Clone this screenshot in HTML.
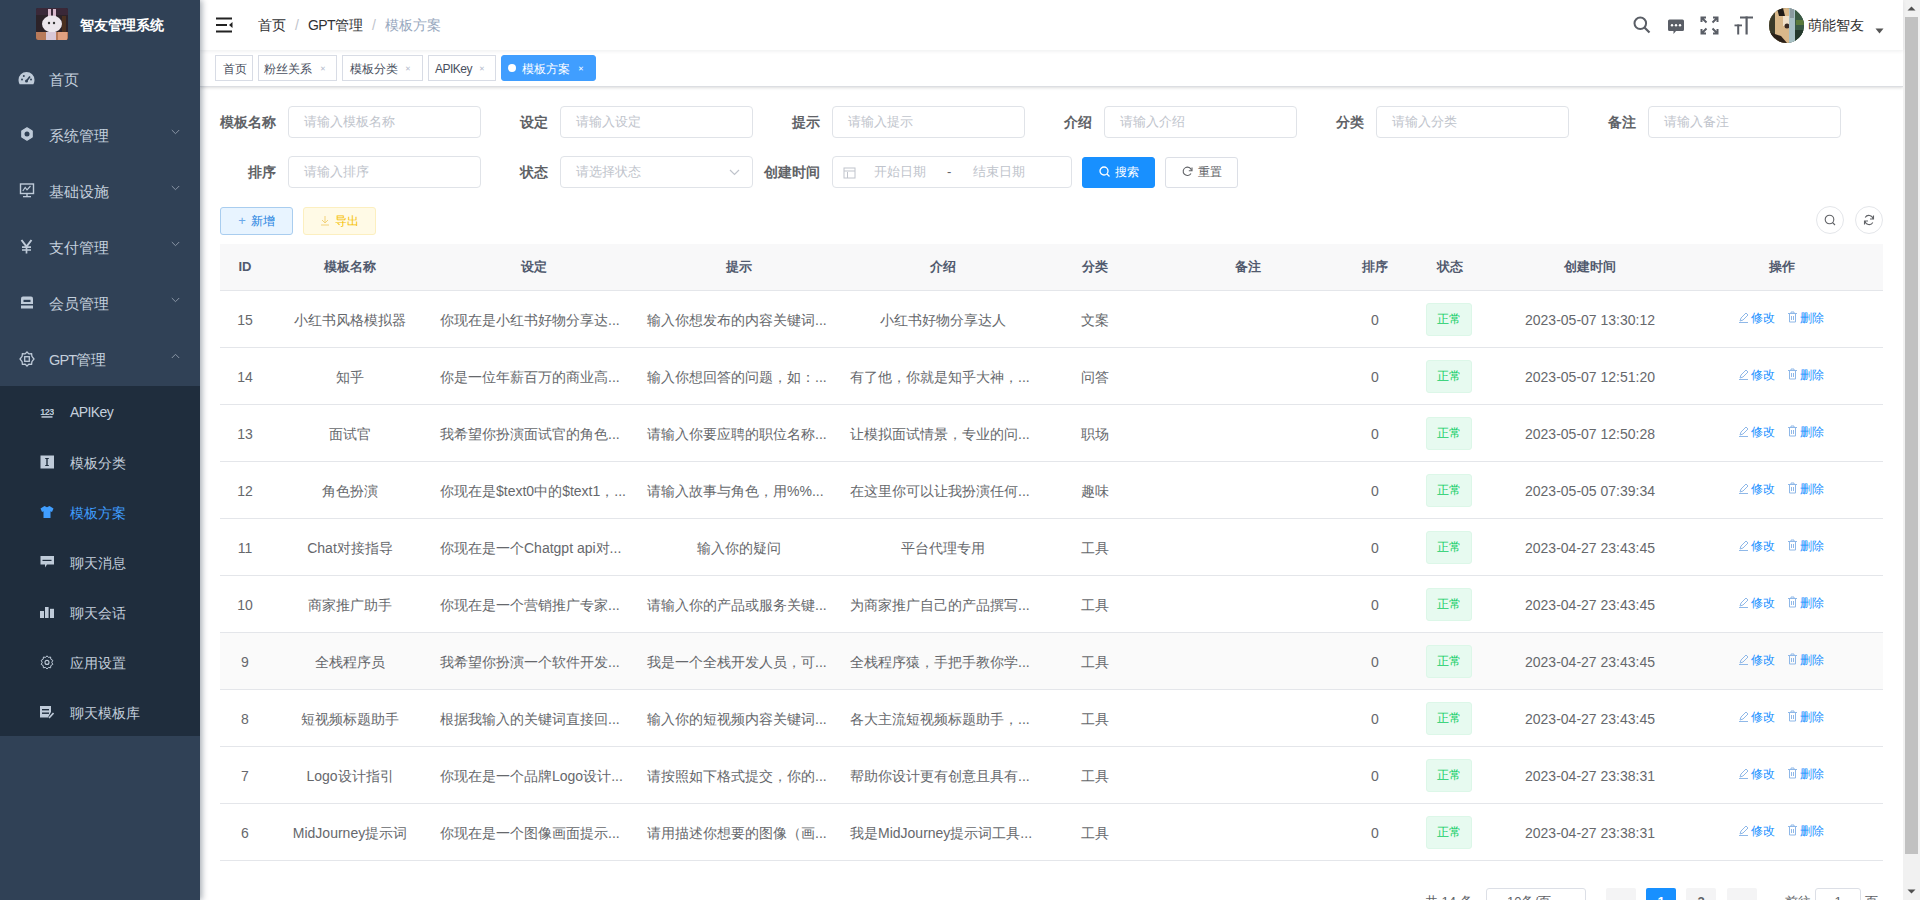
<!DOCTYPE html>
<html><head><meta charset="utf-8"><title>模板方案</title>
<style>
*{box-sizing:border-box;margin:0;padding:0}
html,body{width:1920px;height:900px;overflow:hidden;background:#fff}
body{font-family:"Liberation Sans",sans-serif;font-size:14px;color:#606266;position:relative}
.abs{position:absolute}
#side{position:absolute;left:0;top:0;width:200px;height:900px;background:#304156;box-shadow:2px 0 6px rgba(0,21,41,.35);z-index:5}
.logo{position:absolute;left:36px;top:9px;width:32px;height:32px;border-radius:2px;overflow:hidden}
.title{position:absolute;left:80px;top:0;line-height:50px;color:#fff;font-weight:bold;font-size:14px;white-space:nowrap}
.mi{position:absolute;left:0;width:200px;height:56px;color:#c4cfdc;font-size:14.5px;line-height:56px}
.mi .ico{position:absolute;left:20px;top:22px;width:14px;height:14px}
.mi .ico svg{display:block}
.mi .txt{position:absolute;left:49px;top:1.5px;white-space:nowrap}
.mi .arr{position:absolute;left:171px;top:23px;line-height:0}.mi .arr svg{display:block}
.subwrap{position:absolute;left:0;top:386px;width:200px;height:350px;background:#1f2d3d}
.si{position:absolute;left:0;width:200px;height:50px;line-height:50px;color:#c4cfdc}
.si .ico{position:absolute;left:40px;top:19px;width:14px;height:14px}
.si .ico svg{display:block}
.si .txt{position:absolute;left:70px;top:2px;white-space:nowrap}
.si.act{color:#409eff}
#nav{position:absolute;left:200px;top:0;width:1703px;height:50px;background:#fff;box-shadow:0 1px 4px rgba(0,21,41,.08);z-index:2}
.bc{position:absolute;top:0;line-height:50px;font-size:14px;color:#303133;white-space:nowrap}
.sep{color:#c0c4cc}
#tags{position:absolute;left:200px;top:50px;width:1703px;height:37px;background:#fff;border-bottom:1px solid #dcdee2;box-shadow:0 1px 3px 0 rgba(0,0,0,.12),0 0 3px 0 rgba(0,0,0,.04)}
.tag{position:absolute;top:5px;height:26px;line-height:24px;border:1px solid #d8dce5;color:#495060;background:#fff;font-size:12px;padding:0 8px;white-space:nowrap}
.tag .x{display:inline-block;width:16px;text-align:center;color:#b4bccc;font-size:7px;margin-left:0}
.tag.on{background:#409eff;border-color:#409eff;color:#fff;border-radius:3px}.tag.on .x{color:#fff}
.lbl{position:absolute;width:68px;padding-right:12px;text-align:right;font-weight:bold;color:#606266;font-size:14px;line-height:32px;white-space:nowrap}
.inp{position:absolute;height:32px;border:1px solid #e0e3e8;border-radius:4px;background:#fff;color:#c0c4cc;font-size:13px;line-height:30px;padding-left:15px;white-space:nowrap}
.btn{position:absolute;height:28px;border-radius:3px;font-size:12px;line-height:26px;text-align:center;white-space:nowrap;border:1px solid #dcdfe6}
.th{position:absolute;top:244px;height:47px;line-height:46px;background:#f8f8f9;color:#515a6e;font-weight:bold;font-size:13px;text-align:center;white-space:nowrap;border-bottom:1px solid #e4e6ea}
.row{position:absolute;left:220px;width:1663px;height:57px;border-bottom:1px solid #e4e6ea}
.td{position:absolute;top:2px;height:54px;line-height:54px;font-size:14px;color:#66686c;white-space:nowrap;overflow:hidden;text-align:center}
.tdl{text-align:left;padding-left:10px}
.stag{position:absolute;top:12px;height:33px;line-height:31px;padding:0 10px;font-size:12px;color:#13ce66;background:#e7faf0;border:1px solid #dcf7e8;border-radius:3px}
.op{position:absolute;top:0px;line-height:54px;font-size:12px;color:#1890ff;white-space:nowrap}
.pg{position:absolute;top:888px;height:28px;line-height:28px;font-size:13px;color:#606266;white-space:nowrap}
.pbtn{position:absolute;top:888px;height:28px;min-width:30px;background:#f4f4f5;border-radius:2px;color:#606266;font-size:13px;font-weight:bold;text-align:center;line-height:28px}
</style></head><body>

<div id="side">
<svg class="logo" style="top:8px" width="32" height="32" viewBox="0 0 32 32"><rect width="32" height="32" fill="#2c2228"/><rect x="0" y="0" width="32" height="7" fill="#3a2838"/><rect x="12" y="1" width="3" height="8" fill="#d8b8cc"/><rect x="17" y="1" width="3" height="8" fill="#d8b8cc"/><rect x="26" y="8" width="4" height="16" fill="#4a3020"/><ellipse cx="16" cy="16" rx="10" ry="8.5" fill="#ece6ec"/><circle cx="13" cy="15" r="1.2" fill="#333"/><circle cx="18" cy="15" r="1.2" fill="#333"/><rect x="0" y="24" width="32" height="8" fill="#b87a5a"/><rect x="10" y="24" width="10" height="8" fill="#d8c8d8"/><rect x="22" y="24" width="9" height="8" fill="#e0a080"/></svg>
<div class="title">智友管理系统</div>
<div class="mi" style="top:50px"><div class="ico"><svg width="17" height="15" viewBox="0 0 17 15" style="margin-left:-2px;margin-top:-1px"><path d="M8.5 1A8 8 0 0 0 0.5 9c0 1.5.4 3 1.1 4.3h13.8c.7-1.3 1.1-2.8 1.1-4.3A8 8 0 0 0 8.5 1z" fill="#bfcbd9"/><path d="M8.5 10 L12 5.5" stroke="#304156" stroke-width="1.6"/><circle cx="8.5" cy="10" r="1.5" fill="#304156"/><circle cx="4" cy="8.5" r="1" fill="#304156"/><circle cx="5.8" cy="5" r="1" fill="#304156"/><circle cx="13" cy="8.5" r="1" fill="#304156"/></svg></div><div class="txt">首页</div></div>
<div class="mi" style="top:106px"><div class="ico"><svg width="16" height="16" viewBox="0 0 16 16" style="margin-left:-1px;margin-top:-1px"><path d="M8 0.8 L13.2 3.9 V10.1 L8 13.2 L2.8 10.1 V3.9 Z" fill="#bfcbd9" stroke="#bfcbd9" stroke-width="1.2" stroke-linejoin="round"/><circle cx="8" cy="7" r="2.5" fill="#304156"/></svg></div><div class="txt">系统管理</div><div class="arr"><svg width="9" height="6" viewBox="0 0 9 6"><path d="M0.8 1 L4.5 4.7 L8.2 1" fill="none" stroke="#8a96a6" stroke-width="1"/></svg></div></div>
<div class="mi" style="top:162px"><div class="ico"><svg width="16" height="16" viewBox="0 0 16 16" style="margin-left:-1px;margin-top:-2px"><rect x="1.5" y="2" width="13" height="9.5" fill="none" stroke="#bfcbd9" stroke-width="1.4"/><path d="M3.8 9 L6.2 5.5 L8 7.8 L11.5 4" stroke="#bfcbd9" fill="none" stroke-width="1.2"/><rect x="7.3" y="11.5" width="1.4" height="2.5" fill="#bfcbd9"/><rect x="4" y="14" width="8" height="1.3" fill="#bfcbd9"/></svg></div><div class="txt">基础设施</div><div class="arr"><svg width="9" height="6" viewBox="0 0 9 6"><path d="M0.8 1 L4.5 4.7 L8.2 1" fill="none" stroke="#8a96a6" stroke-width="1"/></svg></div></div>
<div class="mi" style="top:218px"><div class="ico"><svg width="15" height="15" viewBox="0 0 15 15" style="margin-left:-1px;margin-top:-1px"><path d="M2.5 1 L7.5 7.5 L12.5 1" stroke="#bfcbd9" stroke-width="2" fill="none"/><path d="M7.5 7 V14.5 M3 8.2 H12 M3 11 H12" stroke="#bfcbd9" stroke-width="1.7" fill="none"/></svg></div><div class="txt">支付管理</div><div class="arr"><svg width="9" height="6" viewBox="0 0 9 6"><path d="M0.8 1 L4.5 4.7 L8.2 1" fill="none" stroke="#8a96a6" stroke-width="1"/></svg></div></div>
<div class="mi" style="top:274px"><div class="ico"><svg width="16" height="16" viewBox="0 0 16 16" style="margin-left:-1px;margin-top:-1px"><path d="M2 3.5 Q2 1.5 4 1.5 H12 Q14 1.5 14 3.5 V9 H2 Z" fill="#bfcbd9"/><rect x="4.5" y="4.8" width="7" height="2.2" fill="#304156"/><rect x="2" y="10.5" width="12" height="3" fill="#bfcbd9"/></svg></div><div class="txt">会员管理</div><div class="arr"><svg width="9" height="6" viewBox="0 0 9 6"><path d="M0.8 1 L4.5 4.7 L8.2 1" fill="none" stroke="#8a96a6" stroke-width="1"/></svg></div></div>
<div class="mi" style="top:330px"><div class="ico"><svg width="16" height="16" viewBox="0 0 16 16" style="margin-left:-1px;margin-top:-1px"><path d="M8 1 L9.9 2.9 L12.6 2.6 L12.9 5.3 L15 8 L12.9 10.7 L12.6 13.4 L9.9 13.1 L8 15 L6.1 13.1 L3.4 13.4 L3.1 10.7 L1 8 L3.1 5.3 L3.4 2.6 L6.1 2.9 Z" fill="none" stroke="#bfcbd9" stroke-width="1.3"/><rect x="5.7" y="5.7" width="4.6" height="4.6" fill="none" stroke="#bfcbd9" stroke-width="1.3"/></svg></div><div class="txt"><span style="letter-spacing:-0.8px">GPT</span>管理</div><div class="arr"><svg width="9" height="6" viewBox="0 0 9 6"><path d="M0.8 5 L4.5 1.3 L8.2 5" fill="none" stroke="#8a96a6" stroke-width="1"/></svg></div></div>
<div class="subwrap">
<div class="si" style="top:0px"><div class="ico"><svg width="14" height="14" viewBox="0 0 14 14"><text x="7" y="9.5" font-family="Liberation Sans" font-weight="bold" font-size="9" fill="#bfcbd9" text-anchor="middle" letter-spacing="-0.5">123</text><rect x="1.5" y="11.2" width="11" height="1.5" fill="#bfcbd9"/></svg></div><div class="txt" style="letter-spacing:-0.6px;top:1px;">APIKey</div></div>
<div class="si" style="top:50px"><div class="ico"><svg width="14" height="14" viewBox="0 0 14 14"><rect x="0.5" y="0.5" width="14" height="13" fill="#bfcbd9"/><rect x="6.3" y="3" width="1.4" height="8" fill="#1f2d3d"/><rect x="5.2" y="3" width="3.6" height="1" fill="#1f2d3d"/><rect x="5.2" y="10" width="3.6" height="1" fill="#1f2d3d"/></svg></div><div class="txt" style="">模板分类</div></div>
<div class="si act" style="top:100px"><div class="ico"><svg width="14" height="14" viewBox="0 0 14 14"><path d="M4.5 1 L7 2.2 L9.5 1 L13.5 3.5 L12 7 L10.5 6.2 V13 H3.5 V6.2 L2 7 L0.5 3.5 Z" fill="#409eff"/></svg></div><div class="txt" style="">模板方案</div></div>
<div class="si" style="top:150px"><div class="ico"><svg width="14" height="14" viewBox="0 0 14 14"><path d="M0.5 1 H14 V9.5 H7 L5 12.5 V9.5 H0.5 Z" fill="#bfcbd9"/><rect x="2.5" y="4.8" width="9" height="1.2" fill="#1f2d3d"/></svg></div><div class="txt" style="">聊天消息</div></div>
<div class="si" style="top:200px"><div class="ico"><svg width="14" height="14" viewBox="0 0 14 14"><rect x="0" y="6" width="4" height="7" fill="#bfcbd9"/><rect x="5" y="2" width="3.6" height="11" fill="#bfcbd9"/><rect x="10" y="3.8" width="4" height="9.2" fill="#bfcbd9"/></svg></div><div class="txt" style="">聊天会话</div></div>
<div class="si" style="top:250px"><div class="ico"><svg width="14" height="14" viewBox="0 0 14 14"><path d="M7 0.8 L8.4 2.4 L10.6 2 L10.8 4.2 L12.8 5.4 L11.8 7.4 L12.8 9.4 L10.8 10.6 L10.6 12.8 L8.4 12.4 L7 14 L5.6 12.4 L3.4 12.8 L3.2 10.6 L1.2 9.4 L2.2 7.4 L1.2 5.4 L3.2 4.2 L3.4 2 L5.6 2.4 Z" fill="none" stroke="#bfcbd9" stroke-width="1"/><circle cx="7" cy="7.4" r="2" fill="none" stroke="#bfcbd9" stroke-width="1.1"/></svg></div><div class="txt" style="">应用设置</div></div>
<div class="si" style="top:300px"><div class="ico"><svg width="14" height="14" viewBox="0 0 14 14"><path d="M0 1 H11 V7 L8 12.5 H0 Z" fill="#bfcbd9"/><rect x="2" y="4" width="7" height="1.4" fill="#1f2d3d"/><rect x="2" y="7.5" width="7" height="1.4" fill="#1f2d3d"/><path d="M9 13 L13.5 8" stroke="#bfcbd9" stroke-width="1.6"/></svg></div><div class="txt" style="">聊天模板库</div></div>
</div></div>
<div id="nav">
<svg class="abs" style="left:15px;top:15px" width="20" height="20" viewBox="0 0 20 20"><rect x="1" y="2.5" width="16" height="2" fill="#222"/><rect x="1" y="9" width="11" height="2" fill="#222"/><rect x="1" y="15.5" width="16" height="2" fill="#222"/><path d="M17.5 7 L14 10 L17.5 13 Z" fill="#222"/></svg>
<div class="bc" style="left:58px">首页<span class="sep" style="margin:0 9px">/</span><span style="letter-spacing:-0.6px">GPT</span>管理<span class="sep" style="margin:0 9px">/</span><span style="color:#97a8be">模板方案</span></div>
<svg class="abs" style="left:1433px;top:16px" width="18" height="18" viewBox="0 0 18 18"><circle cx="7.3" cy="7.3" r="5.8" fill="none" stroke="#5a5e66" stroke-width="2"/><path d="M11.5 11.5 L16.5 16.5" stroke="#5a5e66" stroke-width="2.2"/></svg>
<svg class="abs" style="left:1467px;top:18px" width="18" height="18" viewBox="0 0 18 18"><path d="M2.5 1.5 H15.5 Q17 1.5 17 3 V11.5 Q17 13 15.5 13 H9 L6.5 16 V13 H2.5 Q1 13 1 11.5 V3 Q1 1.5 2.5 1.5Z" fill="#5a5e66"/><circle cx="5" cy="7.3" r="1.2" fill="#fff"/><circle cx="9" cy="7.3" r="1.2" fill="#fff"/><circle cx="13" cy="7.3" r="1.2" fill="#fff"/></svg>
<svg class="abs" style="left:1500px;top:16px" width="19" height="19" viewBox="0 0 19 19"><g stroke="#5a5e66" stroke-width="2" fill="none"><path d="M1.5 6 V1.5 H6 M1.5 1.5 L6.5 6.5"/><path d="M17.5 6 V1.5 H13 M17.5 1.5 L12.5 6.5"/><path d="M1.5 13 V17.5 H6 M1.5 17.5 L6.5 12.5"/><path d="M17.5 13 V17.5 H13 M17.5 17.5 L12.5 12.5"/></g></svg>
<svg class="abs" style="left:1534px;top:16px" width="20" height="19" viewBox="0 0 20 19"><g fill="#5a5e66"><rect x="6" y="0.5" width="13" height="2"/><rect x="11.5" y="0.5" width="2.2" height="18"/><rect x="0.5" y="8.5" width="7.5" height="1.8"/><rect x="3.2" y="8.5" width="2" height="10"/></g></svg>
<svg class="abs" style="left:1569px;top:8px" width="35" height="35" viewBox="0 0 35 35"><defs><clipPath id="av"><circle cx="17.5" cy="17.5" r="17.5"/></clipPath></defs><g clip-path="url(#av)"><rect width="35" height="35" fill="#2f4a3a"/><rect x="0" y="0" width="20" height="35" fill="#d9b88a"/><rect x="0" y="0" width="6" height="35" fill="#3a3a2a"/><path d="M0 24 L12 28 L18 35 L0 35Z" fill="#2a2018"/><path d="M8 0 L14 0 L16 8 L10 8Z" fill="#1e1a16"/><rect x="14" y="8" width="6" height="10" fill="#f0e0c8"/><circle cx="18" cy="18" r="2.5" fill="#3a2a22"/><rect x="20" y="0" width="6" height="35" fill="#a8c0c4"/><rect x="21" y="0" width="4" height="10" fill="#8a9aa0"/><rect x="26" y="0" width="9" height="35" fill="#3a5a44"/><rect x="27" y="12" width="8" height="5" fill="#5a7a3a"/><rect x="26" y="22" width="9" height="13" fill="#24382c"/></g></svg>
<div class="abs" style="left:1608px;top:0;line-height:50px;font-size:14px;color:#333;white-space:nowrap">萌能智友</div>
<svg class="abs" style="left:1675px;top:28px" width="9" height="6" viewBox="0 0 9 6"><path d="M0.5 0.5 H8.5 L4.5 5.5Z" fill="#555"/></svg>
</div>
<div id="tags">
<div class="tag" style="left:15px;width:38px"><span class="abs" style="left:7px;top:1px;">首页</span></div>
<div class="tag" style="left:58px;width:79px"><span class="abs" style="left:5px;top:1px;">粉丝关系</span><span class="abs x" style="left:56px;top:1px">✕</span></div>
<div class="tag" style="left:142px;width:81px"><span class="abs" style="left:7px;top:1px;">模板分类</span><span class="abs x" style="left:57px;top:1px">✕</span></div>
<div class="tag" style="left:228px;width:68px"><span class="abs" style="left:6px;top:1px;letter-spacing:-0.5px;">APIKey</span><span class="abs x" style="left:45px;top:1px">✕</span></div>
<div class="tag on" style="left:301px;width:95px"><span class="abs" style="left:20px;top:1px;">模板方案</span><span class="abs x" style="left:71px;top:1px">✕</span><span class="abs" style="left:6px;top:8px;width:8px;height:8px;border-radius:50%;background:#fff"></span></div>
</div>
<div class="lbl" style="left:220px;top:106px">模板名称</div><div class="inp" style="left:288px;top:106px;width:193px">请输入模板名称</div>
<div class="lbl" style="left:492px;top:106px">设定</div><div class="inp" style="left:560px;top:106px;width:193px">请输入设定</div>
<div class="lbl" style="left:764px;top:106px">提示</div><div class="inp" style="left:832px;top:106px;width:193px">请输入提示</div>
<div class="lbl" style="left:1036px;top:106px">介绍</div><div class="inp" style="left:1104px;top:106px;width:193px">请输入介绍</div>
<div class="lbl" style="left:1308px;top:106px">分类</div><div class="inp" style="left:1376px;top:106px;width:193px">请输入分类</div>
<div class="lbl" style="left:1580px;top:106px">备注</div><div class="inp" style="left:1648px;top:106px;width:193px">请输入备注</div>
<div class="lbl" style="left:220px;top:156px">排序</div><div class="inp" style="left:288px;top:156px;width:193px">请输入排序</div>
<div class="lbl" style="left:492px;top:156px">状态</div><div class="inp" style="left:560px;top:156px;width:193px">请选择状态<svg class="abs" style="right:12px;top:12px" width="11" height="7" viewBox="0 0 11 7"><path d="M1 1 L5.5 5.5 L10 1" fill="none" stroke="#c0c4cc" stroke-width="1.2"/></svg></div>
<div class="lbl" style="left:764px;top:156px">创建时间</div>
<div class="inp" style="left:832px;top:156px;width:240px;padding-left:0"><svg class="abs" style="left:10px;top:9px" width="13" height="13" viewBox="0 0 13 13"><rect x="1" y="2" width="11" height="10" fill="none" stroke="#c0c4cc" stroke-width="1"/><rect x="1" y="4.5" width="11" height="1" fill="#c0c4cc"/><rect x="4" y="6" width="1" height="6" fill="#c0c4cc"/></svg><span class="abs" style="left:41px;top:0">开始日期</span><span class="abs" style="left:114px;top:0;color:#606266">-</span><span class="abs" style="left:140px;top:0">结束日期</span></div>
<div class="btn" style="left:1082px;top:157px;width:73px;height:31px;line-height:29px;background:#1890ff;border-color:#1890ff;color:#fff"><svg style="vertical-align:-1px;margin-right:5px" width="11" height="11" viewBox="0 0 11 11"><circle cx="5" cy="5" r="4" fill="none" stroke="#fff" stroke-width="1.3"/><path d="M8 8 L10.5 10.5" stroke="#fff" stroke-width="1.3"/></svg>搜索</div>
<div class="btn" style="left:1165px;top:157px;width:73px;height:31px;line-height:29px;background:#fff;color:#606266"><svg style="vertical-align:-1px;margin-right:5px" width="11" height="11" viewBox="0 0 11 11"><path d="M9.5 4.5 A4.2 4.2 0 1 0 9 7.5" fill="none" stroke="#606266" stroke-width="1.1"/><path d="M10 1.5 V4.8 H6.8" fill="none" stroke="#606266" stroke-width="1.1"/></svg>重置</div>
<div class="btn" style="left:220px;top:207px;width:73px;background:#e8f4ff;border-color:#a9cdef;color:#1a7fe0"><span style="margin-right:5px;font-size:13px;color:#6aa8ea">+</span>新增</div>
<div class="btn" style="left:303px;top:207px;width:73px;background:#fffae6;border-color:#fcefc0;color:#f5c000"><svg style="vertical-align:-1px;margin-right:5px" width="10" height="11" viewBox="0 0 10 11"><path d="M5 1 V8 M2 5 L5 8 L8 5 M1 10 H9" fill="none" stroke="#f2d27a" stroke-width="1"/></svg>导出</div>
<div class="abs" style="left:1816px;top:206px;width:28px;height:28px;border:1px solid #e4e6ea;border-radius:50%"><svg class="abs" style="left:7px;top:7px" width="12" height="12" viewBox="0 0 12 12"><circle cx="5.5" cy="5.5" r="4.3" fill="none" stroke="#606266" stroke-width="1.1"/><path d="M8.6 8.6 L11 11" stroke="#606266" stroke-width="1.1"/></svg></div>
<div class="abs" style="left:1855px;top:206px;width:28px;height:28px;border:1px solid #e4e6ea;border-radius:50%"><svg class="abs" style="left:7px;top:7px" width="12" height="12" viewBox="0 0 12 12"><path d="M10 5 A4.2 4.2 0 0 0 2.2 3.5 M2 7 A4.2 4.2 0 0 0 9.8 8.5" fill="none" stroke="#606266" stroke-width="1.1"/><path d="M10.5 1.5 V5 H7 M1.5 10.5 V7 H5" fill="none" stroke="#606266" stroke-width="1.1"/></svg></div>
<div class="th" style="left:220px;width:50px">ID</div>
<div class="th" style="left:270px;width:160px">模板名称</div>
<div class="th" style="left:430px;width:207px">设定</div>
<div class="th" style="left:637px;width:203px">提示</div>
<div class="th" style="left:840px;width:205px">介绍</div>
<div class="th" style="left:1045px;width:100px">分类</div>
<div class="th" style="left:1145px;width:205px">备注</div>
<div class="th" style="left:1350px;width:50px">排序</div>
<div class="th" style="left:1400px;width:100px">状态</div>
<div class="th" style="left:1500px;width:180px">创建时间</div>
<div class="th" style="left:1680px;width:203px">操作</div>
<div class="row" style="top:291px;">
<div class="td" style="left:0px;width:50px">15</div>
<div class="td" style="left:50px;width:160px">小红书风格模拟器</div>
<div class="td tdl" style="left:210px;width:207px">你现在是小红书好物分享达...</div>
<div class="td tdl" style="left:417px;width:203px">输入你想发布的内容关键词...</div>
<div class="td" style="left:620px;width:205px">小红书好物分享达人</div>
<div class="td" style="left:825px;width:100px">文案</div>
<div class="td" style="left:925px;width:205px"></div>
<div class="td" style="left:1130px;width:50px">0</div>
<div class="td" style="left:1280px;width:180px">2023-05-07 13:30:12</div>
<div class="stag" style="left:1206px">正常</div>
<div class="op" style="left:1518px"><svg style="vertical-align:-1px;margin-right:2px" width="11" height="12" viewBox="0 0 11 12"><path d="M2 10 L3 7 L8 2 L10 4 L5 9 Z" fill="none" stroke="#8fb8e8" stroke-width="1"/><path d="M1 11.5 H10" stroke="#8fb8e8" stroke-width="1"/></svg>修改</div>
<div class="op" style="left:1567px"><svg style="vertical-align:-1px;margin-right:2px" width="11" height="12" viewBox="0 0 11 12"><path d="M1 2.5 H10 M4 2.5 V1 H7 V2.5 M2.5 2.5 V11 H8.5 V2.5 M4.5 5 V9 M6.5 5 V9" fill="none" stroke="#8fb8e8" stroke-width="1"/></svg>删除</div>
</div>
<div class="row" style="top:348px;">
<div class="td" style="left:0px;width:50px">14</div>
<div class="td" style="left:50px;width:160px">知乎</div>
<div class="td tdl" style="left:210px;width:207px">你是一位年薪百万的商业高...</div>
<div class="td tdl" style="left:417px;width:203px">输入你想回答的问题，如：...</div>
<div class="td tdl" style="left:620px;width:205px">有了他，你就是知乎大神，...</div>
<div class="td" style="left:825px;width:100px">问答</div>
<div class="td" style="left:925px;width:205px"></div>
<div class="td" style="left:1130px;width:50px">0</div>
<div class="td" style="left:1280px;width:180px">2023-05-07 12:51:20</div>
<div class="stag" style="left:1206px">正常</div>
<div class="op" style="left:1518px"><svg style="vertical-align:-1px;margin-right:2px" width="11" height="12" viewBox="0 0 11 12"><path d="M2 10 L3 7 L8 2 L10 4 L5 9 Z" fill="none" stroke="#8fb8e8" stroke-width="1"/><path d="M1 11.5 H10" stroke="#8fb8e8" stroke-width="1"/></svg>修改</div>
<div class="op" style="left:1567px"><svg style="vertical-align:-1px;margin-right:2px" width="11" height="12" viewBox="0 0 11 12"><path d="M1 2.5 H10 M4 2.5 V1 H7 V2.5 M2.5 2.5 V11 H8.5 V2.5 M4.5 5 V9 M6.5 5 V9" fill="none" stroke="#8fb8e8" stroke-width="1"/></svg>删除</div>
</div>
<div class="row" style="top:405px;">
<div class="td" style="left:0px;width:50px">13</div>
<div class="td" style="left:50px;width:160px">面试官</div>
<div class="td tdl" style="left:210px;width:207px">我希望你扮演面试官的角色...</div>
<div class="td tdl" style="left:417px;width:203px">请输入你要应聘的职位名称...</div>
<div class="td tdl" style="left:620px;width:205px">让模拟面试情景，专业的问...</div>
<div class="td" style="left:825px;width:100px">职场</div>
<div class="td" style="left:925px;width:205px"></div>
<div class="td" style="left:1130px;width:50px">0</div>
<div class="td" style="left:1280px;width:180px">2023-05-07 12:50:28</div>
<div class="stag" style="left:1206px">正常</div>
<div class="op" style="left:1518px"><svg style="vertical-align:-1px;margin-right:2px" width="11" height="12" viewBox="0 0 11 12"><path d="M2 10 L3 7 L8 2 L10 4 L5 9 Z" fill="none" stroke="#8fb8e8" stroke-width="1"/><path d="M1 11.5 H10" stroke="#8fb8e8" stroke-width="1"/></svg>修改</div>
<div class="op" style="left:1567px"><svg style="vertical-align:-1px;margin-right:2px" width="11" height="12" viewBox="0 0 11 12"><path d="M1 2.5 H10 M4 2.5 V1 H7 V2.5 M2.5 2.5 V11 H8.5 V2.5 M4.5 5 V9 M6.5 5 V9" fill="none" stroke="#8fb8e8" stroke-width="1"/></svg>删除</div>
</div>
<div class="row" style="top:462px;">
<div class="td" style="left:0px;width:50px">12</div>
<div class="td" style="left:50px;width:160px">角色扮演</div>
<div class="td tdl" style="left:210px;width:207px">你现在是$text0中的$text1，...</div>
<div class="td tdl" style="left:417px;width:203px">请输入故事与角色，用%%...</div>
<div class="td tdl" style="left:620px;width:205px">在这里你可以让我扮演任何...</div>
<div class="td" style="left:825px;width:100px">趣味</div>
<div class="td" style="left:925px;width:205px"></div>
<div class="td" style="left:1130px;width:50px">0</div>
<div class="td" style="left:1280px;width:180px">2023-05-05 07:39:34</div>
<div class="stag" style="left:1206px">正常</div>
<div class="op" style="left:1518px"><svg style="vertical-align:-1px;margin-right:2px" width="11" height="12" viewBox="0 0 11 12"><path d="M2 10 L3 7 L8 2 L10 4 L5 9 Z" fill="none" stroke="#8fb8e8" stroke-width="1"/><path d="M1 11.5 H10" stroke="#8fb8e8" stroke-width="1"/></svg>修改</div>
<div class="op" style="left:1567px"><svg style="vertical-align:-1px;margin-right:2px" width="11" height="12" viewBox="0 0 11 12"><path d="M1 2.5 H10 M4 2.5 V1 H7 V2.5 M2.5 2.5 V11 H8.5 V2.5 M4.5 5 V9 M6.5 5 V9" fill="none" stroke="#8fb8e8" stroke-width="1"/></svg>删除</div>
</div>
<div class="row" style="top:519px;">
<div class="td" style="left:0px;width:50px">11</div>
<div class="td" style="left:50px;width:160px">Chat对接指导</div>
<div class="td tdl" style="left:210px;width:207px">你现在是一个Chatgpt api对...</div>
<div class="td" style="left:417px;width:203px">输入你的疑问</div>
<div class="td" style="left:620px;width:205px">平台代理专用</div>
<div class="td" style="left:825px;width:100px">工具</div>
<div class="td" style="left:925px;width:205px"></div>
<div class="td" style="left:1130px;width:50px">0</div>
<div class="td" style="left:1280px;width:180px">2023-04-27 23:43:45</div>
<div class="stag" style="left:1206px">正常</div>
<div class="op" style="left:1518px"><svg style="vertical-align:-1px;margin-right:2px" width="11" height="12" viewBox="0 0 11 12"><path d="M2 10 L3 7 L8 2 L10 4 L5 9 Z" fill="none" stroke="#8fb8e8" stroke-width="1"/><path d="M1 11.5 H10" stroke="#8fb8e8" stroke-width="1"/></svg>修改</div>
<div class="op" style="left:1567px"><svg style="vertical-align:-1px;margin-right:2px" width="11" height="12" viewBox="0 0 11 12"><path d="M1 2.5 H10 M4 2.5 V1 H7 V2.5 M2.5 2.5 V11 H8.5 V2.5 M4.5 5 V9 M6.5 5 V9" fill="none" stroke="#8fb8e8" stroke-width="1"/></svg>删除</div>
</div>
<div class="row" style="top:576px;">
<div class="td" style="left:0px;width:50px">10</div>
<div class="td" style="left:50px;width:160px">商家推广助手</div>
<div class="td tdl" style="left:210px;width:207px">你现在是一个营销推广专家...</div>
<div class="td tdl" style="left:417px;width:203px">请输入你的产品或服务关键...</div>
<div class="td tdl" style="left:620px;width:205px">为商家推广自己的产品撰写...</div>
<div class="td" style="left:825px;width:100px">工具</div>
<div class="td" style="left:925px;width:205px"></div>
<div class="td" style="left:1130px;width:50px">0</div>
<div class="td" style="left:1280px;width:180px">2023-04-27 23:43:45</div>
<div class="stag" style="left:1206px">正常</div>
<div class="op" style="left:1518px"><svg style="vertical-align:-1px;margin-right:2px" width="11" height="12" viewBox="0 0 11 12"><path d="M2 10 L3 7 L8 2 L10 4 L5 9 Z" fill="none" stroke="#8fb8e8" stroke-width="1"/><path d="M1 11.5 H10" stroke="#8fb8e8" stroke-width="1"/></svg>修改</div>
<div class="op" style="left:1567px"><svg style="vertical-align:-1px;margin-right:2px" width="11" height="12" viewBox="0 0 11 12"><path d="M1 2.5 H10 M4 2.5 V1 H7 V2.5 M2.5 2.5 V11 H8.5 V2.5 M4.5 5 V9 M6.5 5 V9" fill="none" stroke="#8fb8e8" stroke-width="1"/></svg>删除</div>
</div>
<div class="row" style="top:633px;background:#fafafa;">
<div class="td" style="left:0px;width:50px">9</div>
<div class="td" style="left:50px;width:160px">全栈程序员</div>
<div class="td tdl" style="left:210px;width:207px">我希望你扮演一个软件开发...</div>
<div class="td tdl" style="left:417px;width:203px">我是一个全栈开发人员，可...</div>
<div class="td tdl" style="left:620px;width:205px">全栈程序猿，手把手教你学...</div>
<div class="td" style="left:825px;width:100px">工具</div>
<div class="td" style="left:925px;width:205px"></div>
<div class="td" style="left:1130px;width:50px">0</div>
<div class="td" style="left:1280px;width:180px">2023-04-27 23:43:45</div>
<div class="stag" style="left:1206px">正常</div>
<div class="op" style="left:1518px"><svg style="vertical-align:-1px;margin-right:2px" width="11" height="12" viewBox="0 0 11 12"><path d="M2 10 L3 7 L8 2 L10 4 L5 9 Z" fill="none" stroke="#8fb8e8" stroke-width="1"/><path d="M1 11.5 H10" stroke="#8fb8e8" stroke-width="1"/></svg>修改</div>
<div class="op" style="left:1567px"><svg style="vertical-align:-1px;margin-right:2px" width="11" height="12" viewBox="0 0 11 12"><path d="M1 2.5 H10 M4 2.5 V1 H7 V2.5 M2.5 2.5 V11 H8.5 V2.5 M4.5 5 V9 M6.5 5 V9" fill="none" stroke="#8fb8e8" stroke-width="1"/></svg>删除</div>
</div>
<div class="row" style="top:690px;">
<div class="td" style="left:0px;width:50px">8</div>
<div class="td" style="left:50px;width:160px">短视频标题助手</div>
<div class="td tdl" style="left:210px;width:207px">根据我输入的关键词直接回...</div>
<div class="td tdl" style="left:417px;width:203px">输入你的短视频内容关键词...</div>
<div class="td tdl" style="left:620px;width:205px">各大主流短视频标题助手，...</div>
<div class="td" style="left:825px;width:100px">工具</div>
<div class="td" style="left:925px;width:205px"></div>
<div class="td" style="left:1130px;width:50px">0</div>
<div class="td" style="left:1280px;width:180px">2023-04-27 23:43:45</div>
<div class="stag" style="left:1206px">正常</div>
<div class="op" style="left:1518px"><svg style="vertical-align:-1px;margin-right:2px" width="11" height="12" viewBox="0 0 11 12"><path d="M2 10 L3 7 L8 2 L10 4 L5 9 Z" fill="none" stroke="#8fb8e8" stroke-width="1"/><path d="M1 11.5 H10" stroke="#8fb8e8" stroke-width="1"/></svg>修改</div>
<div class="op" style="left:1567px"><svg style="vertical-align:-1px;margin-right:2px" width="11" height="12" viewBox="0 0 11 12"><path d="M1 2.5 H10 M4 2.5 V1 H7 V2.5 M2.5 2.5 V11 H8.5 V2.5 M4.5 5 V9 M6.5 5 V9" fill="none" stroke="#8fb8e8" stroke-width="1"/></svg>删除</div>
</div>
<div class="row" style="top:747px;">
<div class="td" style="left:0px;width:50px">7</div>
<div class="td" style="left:50px;width:160px">Logo设计指引</div>
<div class="td tdl" style="left:210px;width:207px">你现在是一个品牌Logo设计...</div>
<div class="td tdl" style="left:417px;width:203px">请按照如下格式提交，你的...</div>
<div class="td tdl" style="left:620px;width:205px">帮助你设计更有创意且具有...</div>
<div class="td" style="left:825px;width:100px">工具</div>
<div class="td" style="left:925px;width:205px"></div>
<div class="td" style="left:1130px;width:50px">0</div>
<div class="td" style="left:1280px;width:180px">2023-04-27 23:38:31</div>
<div class="stag" style="left:1206px">正常</div>
<div class="op" style="left:1518px"><svg style="vertical-align:-1px;margin-right:2px" width="11" height="12" viewBox="0 0 11 12"><path d="M2 10 L3 7 L8 2 L10 4 L5 9 Z" fill="none" stroke="#8fb8e8" stroke-width="1"/><path d="M1 11.5 H10" stroke="#8fb8e8" stroke-width="1"/></svg>修改</div>
<div class="op" style="left:1567px"><svg style="vertical-align:-1px;margin-right:2px" width="11" height="12" viewBox="0 0 11 12"><path d="M1 2.5 H10 M4 2.5 V1 H7 V2.5 M2.5 2.5 V11 H8.5 V2.5 M4.5 5 V9 M6.5 5 V9" fill="none" stroke="#8fb8e8" stroke-width="1"/></svg>删除</div>
</div>
<div class="row" style="top:804px;">
<div class="td" style="left:0px;width:50px">6</div>
<div class="td" style="left:50px;width:160px">MidJourney提示词</div>
<div class="td tdl" style="left:210px;width:207px">你现在是一个图像画面提示...</div>
<div class="td tdl" style="left:417px;width:203px">请用描述你想要的图像（画...</div>
<div class="td tdl" style="left:620px;width:205px">我是MidJourney提示词工具...</div>
<div class="td" style="left:825px;width:100px">工具</div>
<div class="td" style="left:925px;width:205px"></div>
<div class="td" style="left:1130px;width:50px">0</div>
<div class="td" style="left:1280px;width:180px">2023-04-27 23:38:31</div>
<div class="stag" style="left:1206px">正常</div>
<div class="op" style="left:1518px"><svg style="vertical-align:-1px;margin-right:2px" width="11" height="12" viewBox="0 0 11 12"><path d="M2 10 L3 7 L8 2 L10 4 L5 9 Z" fill="none" stroke="#8fb8e8" stroke-width="1"/><path d="M1 11.5 H10" stroke="#8fb8e8" stroke-width="1"/></svg>修改</div>
<div class="op" style="left:1567px"><svg style="vertical-align:-1px;margin-right:2px" width="11" height="12" viewBox="0 0 11 12"><path d="M1 2.5 H10 M4 2.5 V1 H7 V2.5 M2.5 2.5 V11 H8.5 V2.5 M4.5 5 V9 M6.5 5 V9" fill="none" stroke="#8fb8e8" stroke-width="1"/></svg>删除</div>
</div>
<div class="pg" style="left:1425px">共 14 条</div>
<div class="abs" style="left:1486px;top:888px;width:100px;height:28px;border:1px solid #dcdfe6;border-radius:3px;font-size:13px;line-height:26px;padding-left:20px;color:#606266">10条/页</div>
<div class="pbtn" style="left:1606px;color:#c0c4cc">‹</div>
<div class="pbtn" style="left:1646px;background:#1890ff;color:#fff">1</div>
<div class="pbtn" style="left:1686px">2</div>
<div class="pbtn" style="left:1727px">›</div>
<div class="pg" style="left:1785px">前往</div>
<div class="abs" style="left:1815px;top:888px;width:46px;height:28px;border:1px solid #dcdfe6;border-radius:3px;font-size:13px;line-height:26px;text-align:center;color:#606266">1</div>
<div class="pg" style="left:1865px">页</div>
<div class="abs" style="left:1903px;top:0;width:17px;height:900px;background:#f1f1f1"></div>
<div class="abs" style="left:1905px;top:17px;width:13px;height:837px;background:#c1c1c1"></div>
<svg class="abs" style="left:1903px;top:0" width="17" height="17" viewBox="0 0 17 17"><path d="M4.5 10.5 L8.5 6.5 L12.5 10.5Z" fill="#505050"/></svg>
<svg class="abs" style="left:1903px;top:883px" width="17" height="17" viewBox="0 0 17 17"><path d="M4.5 6.5 L8.5 10.5 L12.5 6.5Z" fill="#505050"/></svg>
</body></html>
